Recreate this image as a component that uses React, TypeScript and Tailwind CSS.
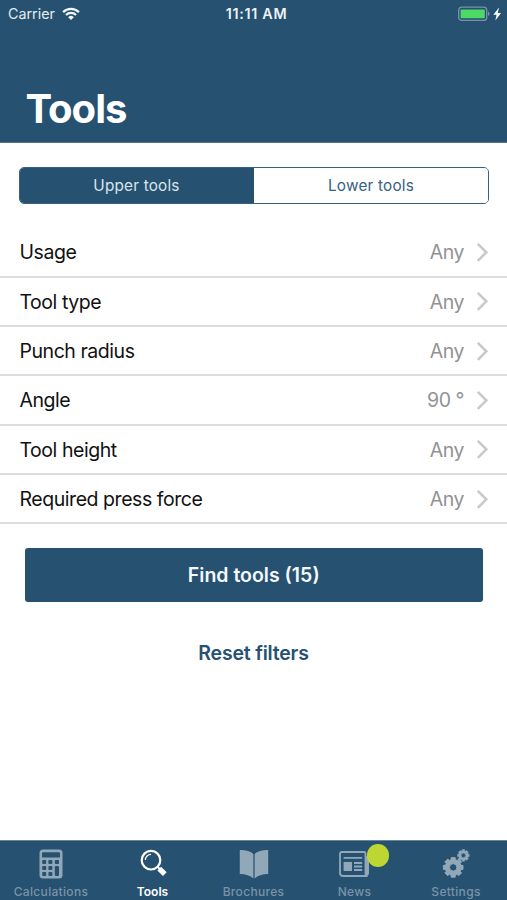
import React from "react";

const filters = [
  { label: "Usage", value: "Any" },
  { label: "Tool type", value: "Any" },
  { label: "Punch radius", value: "Any" },
  { label: "Angle", value: "90 °" },
  { label: "Tool height", value: "Any" },
  { label: "Required press force", value: "Any" },
];

function WifiIcon() {
  return (
    <svg width="18" height="14" viewBox="0 0 18 14" fill="none" stroke="#f2f6f9" strokeWidth="2.3">
      <path d="M1.1 5.1a11.2 11.2 0 0 1 15.8 0" />
      <path d="M4 8a7.1 7.1 0 0 1 10 0" />
      <path d="M9 13 6.2 10.2a4 4 0 0 1 5.6 0Z" fill="#f2f6f9" stroke="none" />
    </svg>
  );
}

function BatteryIcon() {
  return (
    <svg width="44" height="16" viewBox="0 0 44 16">
      <rect x="0.7" y="1.2" width="28" height="13.2" rx="3" fill="none" stroke="#7894a8" strokeWidth="1.3" />
      <rect x="2.6" y="3.4" width="24.2" height="8.8" rx="0.8" fill="#4cd964" />
      <path d="M30 5.6q1.6.5 1.6 2.2T30 10Z" fill="#7894a8" />
      <path d="M41 1.6 35.4 8.8h3.1l-1.1 5.6 5.6-7.4h-3.2Z" fill="#fff" />
    </svg>
  );
}

function CalculatorIcon() {
  return (
    <svg width="24" height="30" viewBox="0 0 24 30">
      <rect x="0.5" y="0.5" width="23" height="29" rx="3.5" fill="#91a8b8" />
      <g fill="#265171">
        <rect x="3" y="3.2" width="18" height="5.4" rx="1.2" />
        <rect x="3.2" y="11" width="4" height="4" rx="1" />
        <rect x="9.4" y="11" width="4" height="4" rx="1" />
        <rect x="15.8" y="11" width="4.2" height="4" rx="1" />
        <rect x="3.2" y="17" width="4" height="4" rx="1" />
        <rect x="9.4" y="17" width="4" height="4" rx="1" />
        <rect x="15.8" y="17" width="4.2" height="10" rx="1.2" />
        <rect x="3.2" y="23" width="4" height="4" rx="1" />
        <rect x="9.4" y="23" width="4" height="4" rx="1" />
      </g>
    </svg>
  );
}

function SearchIcon() {
  return (
    <svg width="28" height="30" viewBox="0 0 28 30" fill="none" stroke="#fff">
      <circle cx="12" cy="11.2" r="9.3" strokeWidth="2.2" />
      <path d="M6.4 11A5.6 5.6 0 0 1 12 5.4" strokeWidth="1.2" />
      <path d="m18.2 17.4 2.7 2.7" strokeWidth="1.8" />
      <path d="m20.2 19.6 5.6 5.6" strokeWidth="5.2" />
    </svg>
  );
}

function BookIcon() {
  return (
    <svg width="30" height="30" viewBox="0 0 30 30" fill="#91a8b8">
      <path d="M.8 1C6.4 1 11.8 2 14.4 5.2V29.6C11.4 26.4 6.6 25.2.8 25Z" />
      <path d="M29.2 1C23.6 1 18.2 2 15.6 5.2V29.6C18.6 26.4 23.4 25.2 29.2 25Z" />
    </svg>
  );
}

function NewsIcon() {
  return (
    <svg width="32" height="26" viewBox="0 0 32 26">
      <path d="M26 5h4v16.5q0 3.5-3 3.5" fill="#91a8b8" />
      <path d="M3 1h22q1.5 0 1.5 1.5V22q0 3 2 3H4q-3 0-3-3V3q0-2 2-2Z" fill="none" stroke="#91a8b8" strokeWidth="1.8" />
      <rect x="4.6" y="11" width="8.4" height="9" fill="#91a8b8" />
      <path d="M4.6 6.9h18.6M15 12h8.2M15 15.5h8.2M15 19h8.2" stroke="#91a8b8" strokeWidth="1.9" />
    </svg>
  );
}

/** Outline of an eight-toothed cog with a round hole. */
function gearPath(cx: number, cy: number, outer: number, inner: number, hole: number) {
  const points: string[] = [];
  for (let tooth = 0; tooth < 8; tooth++) {
    const mid = (tooth * Math.PI) / 4;
    const corners: [number, number][] = [
      [inner, -0.27],
      [outer, -0.2],
      [outer, 0.2],
      [inner, 0.27],
    ];
    for (const [r, offset] of corners) {
      points.push(`${(cx + r * Math.cos(mid + offset)).toFixed(2)} ${(cy + r * Math.sin(mid + offset)).toFixed(2)}`);
    }
  }
  return `M${points.join("L")}ZM${cx - hole} ${cy}a${hole} ${hole} 0 1 0 ${hole * 2} 0a${hole} ${hole} 0 1 0 ${-hole * 2} 0Z`;
}

function SettingsIcon() {
  return (
    <svg width="28" height="30" viewBox="0 0 28 30" fill="#91a8b8" fillRule="evenodd" stroke="#91a8b8" strokeLinejoin="round">
      <path d={gearPath(11.2, 18.4, 10, 8, 3.7)} strokeWidth="1" />
      <path d={gearPath(21.4, 6.4, 5.9, 4.8, 2.3)} strokeWidth="0.6" />
    </svg>
  );
}

const tabs = [
  { label: "Calculations", icon: <CalculatorIcon />, width: "w-[102px]" },
  { label: "Tools", icon: <SearchIcon />, width: "w-[101px]", active: true },
  { label: "Brochures", icon: <BookIcon />, width: "w-[101px]" },
  { label: "News", icon: <NewsIcon />, width: "w-[101px]", badge: true },
  { label: "Settings", icon: <SettingsIcon />, width: "w-[102px]" },
];

export default function App() {
  return (
    <div className="flex h-[900px] w-[507px] flex-col overflow-hidden bg-white font-['Inter','Liberation_Sans',sans-serif]">
      <header className="flex h-[143px] shrink-0 flex-col border-b border-[#54788b] bg-[#265171] text-white">
        <div className="grid h-7 grid-cols-3 items-center">
          <div className="flex items-center gap-[7px] pl-2 text-[14.3px] text-[#e4ebf0]">
            <span>Carrier</span>
            <WifiIcon />
          </div>
          <div className="text-center text-[14.3px] font-semibold tracking-[0.7px] text-[#edf2f5]">
            <span className="pl-1.5">11:11 AM</span>
          </div>
          <div className="flex justify-end pr-[5px]">
            <BatteryIcon />
          </div>
        </div>
        <h1 className="mt-[55px] pl-[25.5px] text-[40px] leading-[52px] font-bold tracking-[-1px]">Tools</h1>
      </header>

      <main className="flex flex-1 flex-col">
        <div className="mr-[18px] ml-[19px] mt-6 flex h-[37px] shrink-0 overflow-hidden rounded-[5px] border border-[#38617f] text-[15.3px] tracking-[0.2px]">
          <button className="w-[234px] bg-[#265171] pt-0.5 pr-2 pl-[7px] text-[#d9e5ed]">Upper tools</button>
          <button className="flex-1 bg-white pt-0.5 text-[#36617f]">Lower tools</button>
        </div>

        <ul className="mt-[24.5px] flex flex-col">
          {filters.map((f) => (
            <li key={f.label} className="flex h-[49.3px] items-center border-b-2 border-[#dcdcde] pr-[18px] pl-[19.5px] text-[19.5px] tracking-[-0.45px]">
              <span className="flex-1 pt-[1.6px] text-[#111]">{f.label}</span>
              <span className="pt-[1.6px] text-[#929294]">{f.value}</span>
              <svg className="ml-[12px]" width="13" height="20" viewBox="0 0 13 20" fill="none" stroke="#c9c9cd" strokeWidth="2.6">
                <path d="m1.8 1.8 8.5 8.5-8.5 8.5" />
              </svg>
            </li>
          ))}
        </ul>

        <button className="mr-[24.5px] ml-[25px] mt-[23.5px] h-[54px] shrink-0 rounded-[3px] bg-[#265171] pt-0.5 text-[19.5px] font-semibold text-[#f4f8fa]">
          Find tools (15)
        </button>
        <button className="mx-auto mt-9 h-[30px] pt-px text-[19.5px] font-semibold tracking-[-0.2px] text-[#265171]">Reset filters</button>
      </main>

      <nav className="flex h-[60px] shrink-0 border-t border-[#68859a] bg-[#265171]">
        {tabs.map((t) => (
          <div key={t.label} className={`flex flex-col items-center ${t.width}`}>
            <div className="relative mt-[7px] flex h-[31px] items-center">
              {t.icon}
              {t.badge && <span className="absolute top-[-4px] left-[28px] size-[22.5px] rounded-full bg-[#bed631]" />}
            </div>
            <span className={t.active ? "mt-[5px] text-[12px] leading-4 font-semibold text-white" : "mt-[5px] text-[12px] leading-4 font-medium tracking-[0.32px] text-[#7994a8]"}>
              {t.label}
            </span>
          </div>
        ))}
      </nav>
    </div>
  );
}
